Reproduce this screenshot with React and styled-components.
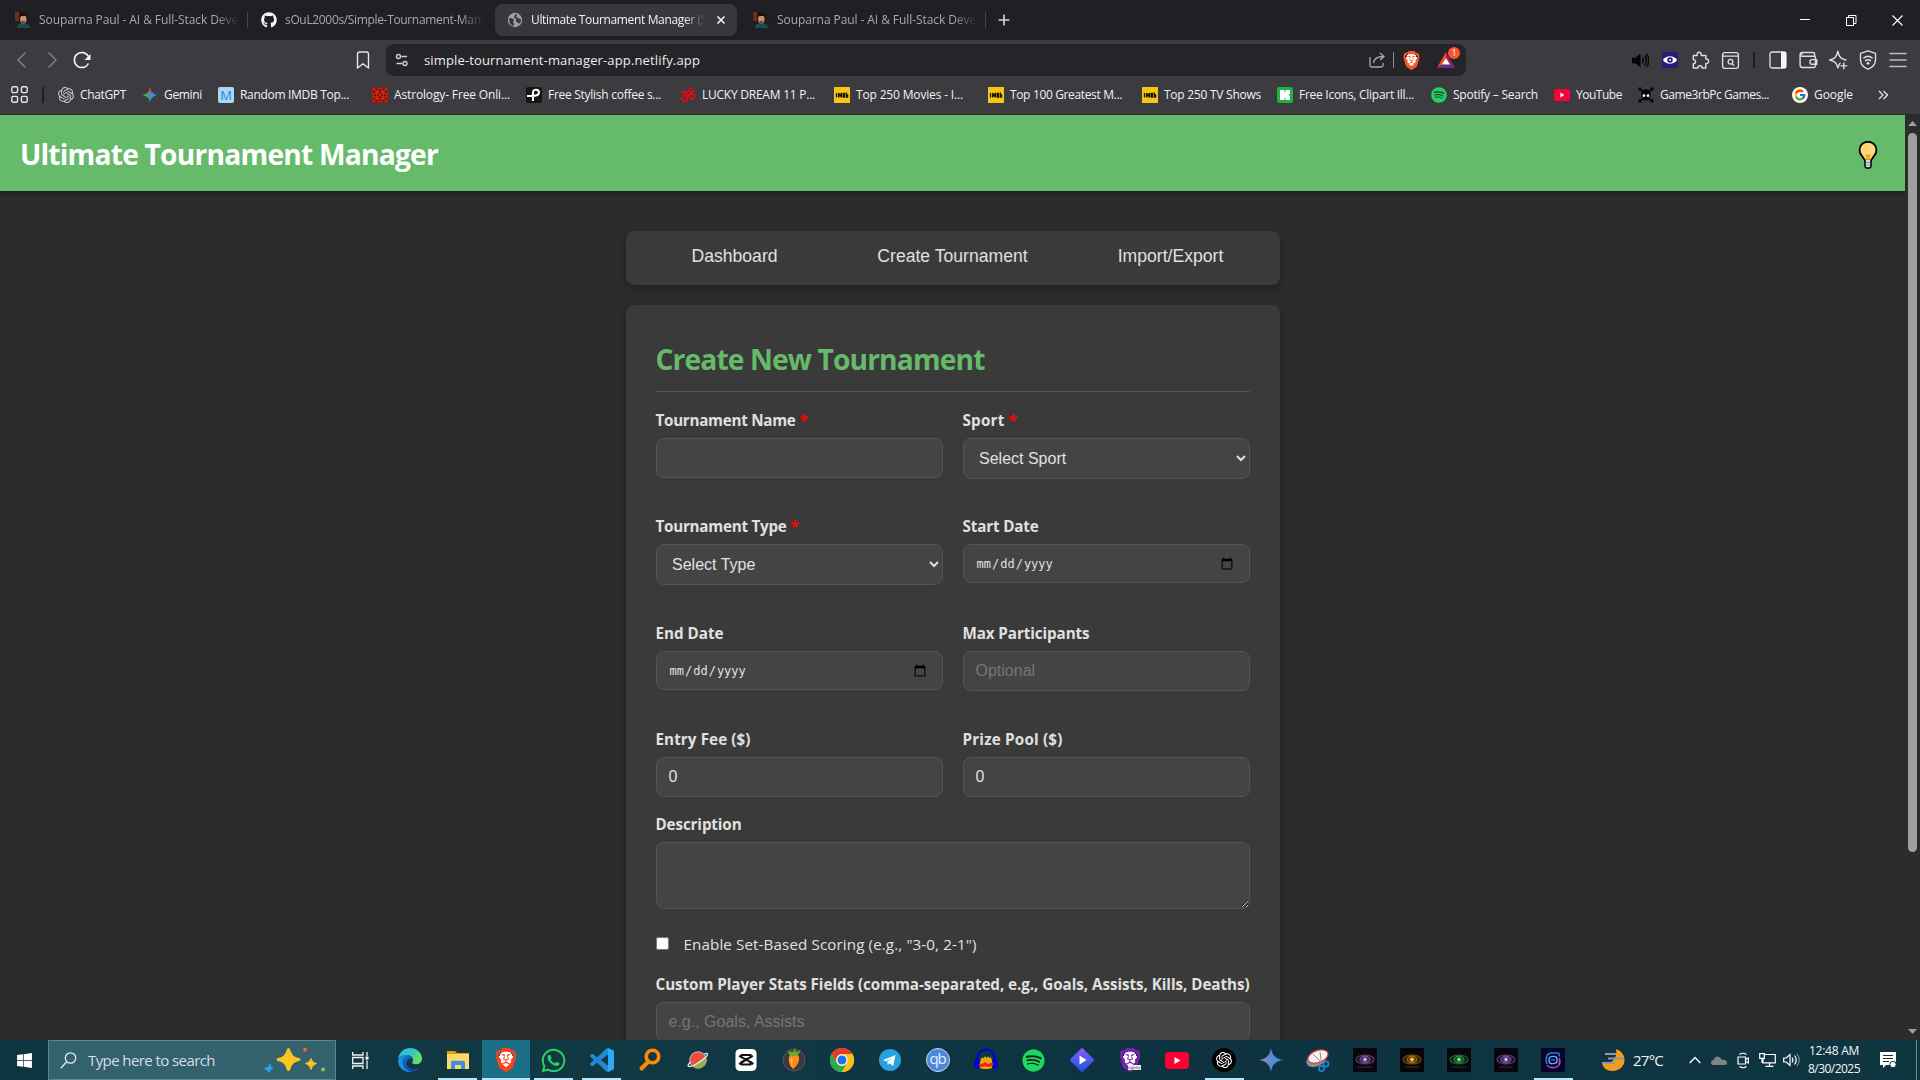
import React, { useLayoutEffect, useRef, useState } from "react";
import styled, { createGlobalStyle, css } from "styled-components";
import { FaGithub, FaSpotify, FaWhatsapp, FaWindows } from "react-icons/fa";
import { FcGoogle } from "react-icons/fc";
import { SiOpenai, SiBrave } from "react-icons/si";

const ui = `"Segoe UI", "Open Sans", "Noto Sans", sans-serif`;
const arial = `Arial, "Liberation Sans", sans-serif`;

const GlobalStyle = createGlobalStyle`
  * { box-sizing: border-box; }
  body { margin: 0; background: #2c2c2c; font-family: ${ui}; overflow: hidden; }
  svg { display: block; flex: none; }
`;

/* ---------- text that tracks itself to a given width ---------- */
const FitText = styled.span`
  display: inline-block;
  white-space: nowrap;
`;

function Fit({ w, children }) {
  const ref = useRef(null);
  const [spacing, setSpacing] = useState(0);
  useLayoutEffect(() => {
    const natural = ref.current.getBoundingClientRect().width;
    setSpacing((w - natural) / children.length);
  }, [w, children]);
  return (
    <FitText ref={ref} style={{ letterSpacing: `${spacing}px` }}>
      {children}
    </FitText>
  );
}

/* ---------- frame ---------- */
const Screen = styled.div`
  width: 1920px;
  height: 1080px;
  display: flex;
  flex-direction: column;
  overflow: hidden;
`;

/* ---------- tab strip ---------- */
const TabStrip = styled.div`
  height: 40px;
  flex: none;
  display: flex;
  align-items: flex-start;
  padding: 4px 0 0 3px;
  background: #1f1f24;
`;
const Tab = styled.div`
  width: 242px;
  height: 32px;
  display: flex;
  align-items: center;
  gap: 8px;
  padding-left: 12px;
  border-radius: 8px;
  font-size: 12px;
  color: ${(p) => (p.$active ? "#f2f2f3" : "#a9a9ad")};
  background: ${(p) => (p.$active ? "#37373c" : "transparent")};
`;
const TabTitle = styled.div`
  width: ${(p) => p.$w}px;
  padding-bottom: 2px;
  overflow: hidden;
  white-space: nowrap;
  mask-image: linear-gradient(to right, #000 88%, transparent 100%);
`;
const TabGap = styled.div`
  width: 4px;
  height: 32px;
  display: flex;
  align-items: center;
  justify-content: center;
  &::before {
    content: "";
    width: 1px;
    height: 16px;
    background: ${(p) => (p.$line ? "#44444a" : "transparent")};
  }
`;
const NewTab = styled.div`
  margin: 6px 0 0 4px;
  width: 26px;
  height: 20px;
  display: flex;
  align-items: center;
  justify-content: center;
`;
const WindowButtons = styled.div`
  margin-left: auto;
  height: 32px;
  display: flex;
`;
const WindowButton = styled.div`
  width: 46px;
  display: flex;
  align-items: center;
  justify-content: center;
`;

/* ---------- toolbar ---------- */
const Toolbar = styled.div`
  height: 40px;
  flex: none;
  display: flex;
  align-items: center;
  background: #3b3b40;
`;
const ToolGroup = styled.div`
  display: flex;
  align-items: center;
  ${(p) =>
    p.$left
      ? css`
          width: 386px;
          padding: 0 8px 0 7px;
        `
      : css`
          margin-left: auto;
          padding-right: 7px;
        `}
`;
const ToolSlot = styled.div`
  width: 30px;
  height: 30px;
  display: flex;
  align-items: center;
  justify-content: center;
  margin-left: ${(p) => (p.$push ? "auto" : 0)};
`;
const Divider = styled.div`
  width: ${(p) => p.$thick || 1}px;
  height: 16px;
  margin: 0 ${(p) => p.$m || 0}px;
  background: ${(p) => p.$color};
`;
const UrlBar = styled.div`
  width: 1080px;
  height: 32px;
  display: flex;
  align-items: center;
  padding: 0 11px 0 8px;
  border-radius: 8px;
  background: #242429;
  color: #ececee;
  font-size: 13px;
`;
const UrlText = styled.div`
  margin-left: 14px;
  flex: 1;
`;
const Triangle = styled.div`
  position: relative;
  margin-left: 16px;
`;
const Badge = styled.div`
  position: absolute;
  left: 11px;
  top: -4px;
  width: 12px;
  height: 12px;
  border-radius: 6px;
  background: #fb542b;
  color: #fff;
  font-size: 9px;
  line-height: 12px;
  text-align: center;
`;

/* ---------- bookmarks ---------- */
const BookmarkBar = styled.div`
  height: 35px;
  flex: none;
  display: flex;
  align-items: center;
  padding: 0 0 5px 11px;
  background: #3b3b40;
  border-bottom: 1px solid #2e2e32;
  color: #f1f1f2;
  font-size: 12px;
`;
const BookmarkItem = styled.div`
  width: ${(p) => p.$w}px;
  flex: none;
  display: flex;
  align-items: center;
  gap: 6px;
`;

/* ---------- page ---------- */
const Viewport = styled.div`
  height: 925px;
  flex: none;
  display: flex;
  background: #2c2c2c;
`;
const Page = styled.div`
  flex: 1;
  height: 925px;
  overflow: hidden;
  display: flex;
  flex-direction: column;
  align-items: center;
`;
const Header = styled.header`
  width: 100%;
  height: 76px;
  flex: none;
  display: flex;
  align-items: center;
  justify-content: space-between;
  padding: 0 27px 0 20px;
  background: #66bb6a;
  box-shadow: 0 2px 5px rgba(0, 0, 0, 0.4);
`;
const SiteTitle = styled.h1`
  margin: 0;
  padding-top: 1px;
  font-size: 28.2px;
  font-weight: 700;
  color: #fff;
`;
const BulbBox = styled.div`
  padding-top: 3px;
`;
const Card = styled.section`
  width: 654px;
  flex: none;
  border-radius: 8px;
  background: #3a3a3a;
  box-shadow: 0 4px 8px rgba(0, 0, 0, 0.28);
`;
const Nav = styled(Card)`
  height: 54px;
  margin: 40px 0 20px;
  display: flex;
  padding-bottom: 3px;
`;
const NavButton = styled.button`
  flex: 1;
  border: 0;
  padding: 0;
  background: transparent;
  color: #e0e0e0;
  font: 17.6px ${arial};
`;
const FormCard = styled(Card)`
  height: 900px;
  padding: 30px;
  color: #e0e0e0;
`;
const FormTitle = styled.h2`
  margin: 0 0 18px;
  height: 57px;
  line-height: 48px;
  font-size: 28.2px;
  color: #66bb6a;
  border-bottom: 1px solid #555;
`;
const FieldGrid = styled.div`
  display: grid;
  grid-template-columns: 1fr 1fr;
  column-gap: 20px;
  grid-template-rows: 106.3px 106.3px 106.3px 68px;
  margin-bottom: 17px;
`;
const Field = styled.div`
  display: flex;
  flex-direction: column;
`;
const Label = styled.label`
  height: 20px;
  line-height: 20px;
  margin-bottom: 8px;
  font-size: 15.2px;
  font-weight: 700;
  white-space: nowrap;
`;
const Required = styled.span`
  margin-left: 4px;
  color: #f00;
`;
const control = css`
  width: 100%;
  margin: 0;
  border: 1px solid #555;
  border-radius: 8px;
  background: #444;
  color: #e0e0e0;
  font: 16px ${arial};
  outline: 0;
`;
const Input = styled.input`
  ${control}
  height: 40px;
  padding: 0 12px;
  &::placeholder { color: #757575; }
`;
const DateInput = styled.input`
  ${control}
  height: 39px;
  padding: 1px 13px 0 12px;
  font: 12px "DejaVu Sans Mono", monospace;
  &::-webkit-calendar-picker-indicator { width: 14px; height: 14px; }
`;
const Select = styled.select`
  ${control}
  height: 41px;
  padding: 0 12px 0 11.5px;
`;
const TextArea = styled.textarea`
  ${control}
  display: block;
  height: 67px;
  padding: 12px;
  resize: vertical;
`;
const CheckRow = styled.label`
  display: flex;
  align-items: center;
  gap: 15px;
  height: 20px;
  margin: 25px 0 20px;
  font-size: 15.2px;
  input { margin: 0; width: 13px; height: 13px; }
`;

/* ---------- scrollbar ---------- */
const ScrollTrack = styled.div`
  width: 15px;
  height: 925px;
  display: flex;
  flex-direction: column;
  align-items: center;
  justify-content: space-between;
  padding: 6px 0;
  background: #2c2c2c;
`;
const ScrollThumb = styled.div`
  width: 9px;
  height: 719px;
  margin: 7px 0 auto;
  border-radius: 5px;
  background: #9f9f9f;
`;

/* ---------- taskbar ---------- */
const Taskbar = styled.div`
  height: 40px;
  flex: none;
  display: flex;
  background: linear-gradient(90deg, #0e3440, #113944 30%, #0d3341 60%, #0f3541);
  color: #f3f6f7;
`;
const marks = {
  0: "none",
  1: "linear-gradient(#b5e8fa, #b5e8fa) center bottom / 39px 2px no-repeat",
  2: "linear-gradient(#b5e8fa, #b5e8fa) center bottom / 100% 2px no-repeat #1b6f86",
};
const Slot = styled.div`
  width: ${(p) => p.$w || 48}px;
  height: 40px;
  flex: none;
  display: flex;
  align-items: center;
  justify-content: center;
  background: ${(p) => marks[p.$state || 0]};
`;
const Search = styled.div`
  width: 288px;
  height: 40px;
  display: flex;
  align-items: center;
  padding: 0 9px 0 11px;
  border: 1px solid #5d8791;
  background: #34616e;
  color: #d3dfe2;
  font-size: 15px;
`;
const SearchHint = styled.div`
  margin-left: 11px;
  flex: 1;
`;
const Apps = styled.div`
  display: flex;
  margin: 0 0.5px 0 1.5px;
`;
const Weather = styled.div`
  width: 106px;
  padding-left: 24px;
  display: flex;
  align-items: center;
  gap: 7px;
  font-size: 15px;
`;
const Clock = styled.div`
  width: 62px;
  display: flex;
  flex-direction: column;
  align-items: center;
  justify-content: center;
  font-size: 12px;
  line-height: 18px;
`;
const ShowDesktop = styled.div`
  width: 1px;
  margin-left: auto;
  margin-right: 3px;
  background: #6d8a92;
`;

/* ---------- small drawings ---------- */
const Svg = ({ s = 16, w, h, vb = "0 0 24 24", children, ...rest }) => (
  <svg width={w || s} height={h || s} viewBox={vb} fill="none" {...rest}>
    {children}
  </svg>
);
const line = { stroke: "#dededf", strokeWidth: 1.7, strokeLinecap: "round", strokeLinejoin: "round" };

const Portrait = () => (
  <Svg vb="0 0 16 16">
    <path fill="#241c1a" d="M0 0h16v16H0z" />
    <path fill="#6b3018" d="M0 0h4v9H0z" />
    <path fill="#1d4c50" d="M2 16c0-4 3-5 6-5s7 1 7 5z" />
    <ellipse cx="8.300" cy="7" rx="3.200" ry="4.400" fill="#c98f75" />
    <path fill="#16100f" d="M4.600 6C4 1.500 6 .5 9 .8s3.500 2 2.800 5L10.500 4H6z" />
    <path fill="#5b372d" d="M6.500 9.500c1-.6 2.500-.6 3.500 0l-.7 1.300h-2z" />
  </Svg>
);
const Globe = () => (
  <Svg vb="0 0 16 16">
    <circle cx="8" cy="8" r="7.200" fill="#9b9ea3" />
    <path fill="#37373c" d="M2.200 6.500c1.800-.6 4 0 4.600 1.200.5 1.200-.8 1.500-.5 2.500.3.800.8 1 .6 2.300l-.4 1.500C3.500 13.500 1.800 10 2.200 6.500zM8.500 2c1.500 0 2 1 1.200 1.800-.7.800-.2 1.600.8 2 1.200.4 1.800 1.400 3.300 1.200.3 1.500 0 3-1 4.500-1.300 0-1.800-1-3-1.500-1.200-.6-1-1.800-.2-2.500L7.500 6c-1-1 .2-2 1-4z" />
  </Svg>
);
const Imdb = () => (
  <Svg vb="0 0 16 16">
    <path fill="#f5c518" d="M0 0h16v16H0z" />
    <path stroke="#1b1600" strokeWidth="1.300" d="M2.500 6v4.500M4.600 10.500V6l1.400 3 1.400-3v4.500M9.200 6.500v3.500h1.300V6.500zM12.400 5.500v4.700h1.200V8h-1.200" />
  </Svg>
);
const YouTube = ({ w = 16, h = 12 }) => (
  <Svg w={w} h={h} vb="0 0 24 17" preserveAspectRatio="none">
    <rect width="24" height="17" rx="4" fill="#ff0033" />
    <path fill="#fff" d="M9.500 5v7l6-3.500z" />
  </Svg>
);
const starPath = "M12 0c.8 7 5 11.200 12 12-7 .8-11.200 5-12 12-.8-7-5-11.200-12-12 7-.8 11.200-5 12-12z";
const BookmarkGemini = () => (
  <Svg s={16}>
    <defs>
      <linearGradient id="gem-a" x1="0" y1=".7" x2="1" y2=".4">
        <stop offset="0" stopColor="#f6c22d" />
        <stop offset=".35" stopColor="#38a66b" />
        <stop offset=".6" stopColor="#3f86f6" />
        <stop offset="1" stopColor="#3f86f6" />
      </linearGradient>
    </defs>
    <path fill="url(#gem-a)" d={starPath} />
    <path fill="#ea4335" d="M12 0c.4 3.500 1.600 6.200 3.600 8.300L12 9 8.400 8.300C10.400 6.200 11.600 3.500 12 0z" />
  </Svg>
);
const TaskbarGemini = () => (
  <Svg s={24}>
    <defs>
      <linearGradient id="gem-b" x1="0" y1="0" x2="1" y2="0">
        <stop offset="0" stopColor="#b480c8" />
        <stop offset=".5" stopColor="#5d86d0" />
        <stop offset="1" stopColor="#2fa3dc" />
      </linearGradient>
    </defs>
    <path fill="url(#gem-b)" d={starPath} />
  </Svg>
);
const BraveWrap = styled.div`
  width: ${(p) => p.$s}px;
  height: ${(p) => p.$s}px;
  display: flex;
  color: ${(p) => p.$c};
  background: radial-gradient(ellipse 30% 38% at 50% 48%, #fff 98%, transparent 100%);
`;
const BraveFace = ({ s = 20, color = "#fb542b" }) => (
  <BraveWrap $s={s} $c={color}>
    <SiBrave size={s} />
  </BraveWrap>
);

const Om = () => (
  <Svg>
    <path stroke="#f00" strokeWidth="2.600" strokeLinecap="round" d="M3 9c2-3 7-2 7 1 0 2.500-3 2.500-4 2.500 3 0 6 1 5.500 5C11 22 3 22 2 16.500M11 14c3 0 3-3.500 6-4 4-.5 5.500 3.500 4 6.500-1.500 2.500-5 2-5-.5M12 5.500c3 2.500 7 2 9-1" />
    <circle cx="16.500" cy="2" r="1.700" fill="#f00" />
  </Svg>
);
const Skull = () => (
  <Svg>
    <g fill="#050505">
      <circle cx="3" cy="3" r="2.500" /><circle cx="21" cy="3" r="2.500" /><circle cx="3" cy="21" r="2.500" /><circle cx="21" cy="21" r="2.500" />
      <path d="M5 11c0-10 14-10 14 0 0 3-1 5-2 5v4H7v-4c-1 0-2-2-2-5z" />
      <path stroke="#050505" strokeWidth="2.500" d="M3 3l5 5M21 3l-5 5M3 21l5-4M21 21l-5-4" />
    </g>
    <circle cx="9" cy="13" r="2" fill="#fff" /><circle cx="15" cy="13" r="2" fill="#fff" />
  </Svg>
);
const LetterTile = styled.div`
  width: 16px;
  height: 16px;
  flex: none;
  border-radius: 2px;
  background: #a9d8f7;
  color: #2f86c9;
  font: 400 13px/16px "Open Sans", sans-serif;
  text-align: center;
`;

const bookmarks = [
  [84, "ChatGPT", 46, <SiOpenai size={16} color="#c9c9cb" />],
  [76, "Gemini", 38, <BookmarkGemini />],
  [154, "Random IMDB Top...", 109, <LetterTile>M</LetterTile>],
  [154, "Astrology- Free Onli...", 116, (
    <Svg key="a" vb="0 0 16 16"><rect width="16" height="16" rx="2" fill="#4a1610" /><path stroke="#d8230f" strokeWidth="1.200" d="M1 1h14v14H1zM1 1l14 14M15 1L1 15M8 1l7 7-7 7-7-7zM4.500 4.500h7v7h-7z" /></Svg>
  )],
  [154, "Free Stylish coffee s...", 113, (
    <Svg key="p" vb="0 0 16 16"><rect width="16" height="16" rx="2" fill="#161616" /><path stroke="#fff" strokeWidth="2" d="M7 14V5.500C7 1.500 13 2 13 5.500S9 9 1 9" /></Svg>
  )],
  [154, "LUCKY DREAM 11 P...", 113, <Om />],
  [154, "Top 250 Movies - I...", 107, <Imdb />],
  [154, "Top 100 Greatest M...", 112, <Imdb />],
  [135, "Top 250 TV Shows", 97, <Imdb />],
  [154, "Free Icons, Clipart Ill...", 115, (
    <Svg key="f" vb="0 0 16 16"><rect width="16" height="16" rx="2" fill="#1fb141" /><path fill="#fff" d="M3 3h4.500v3l1.500-3h4v3.500L12 8l1 1.500V13H9l-1.500-3v3H3z" /></Svg>
  )],
  [123, "Spotify – Search", 85, <FaSpotify size={16} color="#1ed760" />],
  [84, "YouTube", 46, <YouTube />],
  [154, "Game3rbPc Games...", 109, <Skull />],
  [86, "Google", 39, (
    <Svg key="g" vb="0 0 16 16"><circle cx="8" cy="8" r="8" fill="#fff" /><g transform="translate(1.500 1.500)"><FcGoogle size={13} /></g></Svg>
  )],
];

const EyeTile = ({ c, bg = "#08060c" }) => (
  <Svg s={24}>
    <path fill={bg} d="M0 0h24v24H0z" />
    <ellipse cx="12" cy="11.500" rx="9" ry="4.500" fill={c} fillOpacity=".15" stroke={c} strokeOpacity=".5" strokeWidth="1.200" />
    <ellipse cx="12" cy="11.500" rx="5" ry="3.500" fill={c} fillOpacity=".3" stroke={c} strokeWidth=".8" />
    <circle cx="12" cy="11.500" r="2.200" fill={c} /><circle cx="12" cy="11.500" r=".9" fill="#fff" />
    <path stroke={c} strokeOpacity=".35" d="M5 19h14" />
  </Svg>
);

const QbDisc = styled.div`
  width: 24px;
  height: 24px;
  border-radius: 50%;
  border: 1px solid #c2dcf8;
  background: #4c88d6;
  color: #e6f1ff;
  font: 15px/19px "Open Sans", sans-serif;
  text-align: center;
`;
const SpotifyBack = styled.div`
  border-radius: 50%;
  background: #10231a;
`;
const NightlyBox = styled.div`
  position: relative;
`;
const NightlyLabel = styled.div`
  position: absolute;
  left: 10px;
  top: 17px;
  width: 13px;
  height: 5px;
  background: #eee;
  color: #333;
  font: 4px/5px "Open Sans", sans-serif;
  text-align: center;
`;
const OpenAiBack = styled.div`
  width: 24px;
  height: 24px;
  border-radius: 50%;
  display: flex;
  align-items: center;
  justify-content: center;
  background: #000;
  color: #fff;
`;

const apps = [
  [48, 0, (
    <Svg key="edge" s={24}>
      <defs>
        <linearGradient id="eg" x1="0" y1="0" x2="1" y2=".5"><stop offset="0" stopColor="#2bb4ea" /><stop offset=".55" stopColor="#35c7c3" /><stop offset="1" stopColor="#67e05a" /></linearGradient>
        <linearGradient id="eb" x1="0" y1="0" x2=".6" y2="1"><stop offset="0" stopColor="#1577cf" /><stop offset="1" stopColor="#0c4aa0" /></linearGradient>
      </defs>
      <path fill="url(#eg)" d="M.3 10C1.500 4 6.200 0 12 0c7 0 12 5 12 10.200 0 4-3 6-6 6-2.700 0-4-.9-4-1.700 0-.7 1-1.200 1-2.800C15 9 12.500 7.200 9 7.200 5 7.200 1.800 8.500.3 10z" />
      <path fill="url(#eb)" d="M0 12.500C.5 8.500 4.500 7 8.500 7c4.200 0 6.500 2.500 6.500 4.700-1.500-2.200-6.500-1.200-6.500 3.300 0 4 4 7 8.500 6.200 2-.3 3.800-1.200 5-2.400C20 22 16.200 24 12 24 5 24 0 19 0 12.500z" />
      <path fill="#1a8fdb" d="M8.500 7C4.800 9 3.500 14 5.500 18c1.600 3.200 4.300 5 7.500 5.900C6 24.500 0 19.500 0 12.500.5 8.500 4.500 7 8.500 7z" />
    </Svg>
  )],
  [48, 1, (
    <Svg key="ex" s={24}>
      <path fill="#e0a100" d="M1 3h8l2 2h12v4H1z" /><path fill="#ffd968" d="M1 6h22v15H1z" />
      <path fill="#3f8fe0" d="M5 21v-6.500c0-1 .8-1.700 1.700-1.700h10.600c1 0 1.700.7 1.700 1.700V21h-4v-4H9v4z" />
    </Svg>
  )],
  [48, 2, <BraveFace key="br" s={24} color="#ff3f17" />],
  [48, 1, <FaWhatsapp key="wa" size={27} color="#25d366" />],
  [48, 1, (
    <Svg key="vs" s={24}>
      <path fill="#1f8ad2" fillRule="evenodd" d="M23.150 2.587L18.210.210a1.494 1.494 0 0 0-1.705.290l-9.460 8.630-4.120-3.128a.999.999 0 0 0-1.276.057L.327 7.261A1 1 0 0 0 .326 8.740L3.899 12 .326 15.260a1 1 0 0 0 .001 1.479L1.650 17.940a.999.999 0 0 0 1.276.057l4.120-3.128 9.460 8.630a1.492 1.492 0 0 0 1.704.290l4.942-2.377A1.500 1.500 0 0 0 24 20.060V3.939a1.500 1.500 0 0 0-.850-1.352zm-5.146 14.861L10.826 12l7.178-5.448v10.896z" />
      <path fill="#31a8f5" d="M18 0l5.150 2.587A1.500 1.500 0 0 1 24 3.940v16.120a1.500 1.500 0 0 1-.85 1.350L18 24z" />
    </Svg>
  )],
  [48, 0, (
    <Svg key="or" s={24}><circle cx="14.500" cy="8.500" r="6.300" stroke="#ff8a00" strokeWidth="3.600" /><path stroke="#ff8a00" strokeWidth="4" strokeLinecap="round" d="M9.500 14.500L3.500 20.500" /></Svg>
  )],
  [48, 0, (
    <Svg key="pl" s={22}><circle cx="12" cy="12" r="9" fill="#ed4c3c" stroke="#e6dfe2" strokeWidth=".8" /><path fill="#8fb544" d="M21 10.500a9 9 0 0 1-15 8z" /><path stroke="#e6dfe2" strokeWidth="1.500" d="M4 14c-5 5-3 6.500 4 3.500 8-4 16-10.500 14-12.500-.6-.5-2 0-3.500.8" /></Svg>
  )],
  [48, 0, (
    <Svg key="cc" s={22}><rect x=".5" y="0" width="23" height="24" rx="5" fill="#fff" /><path stroke="#111" strokeWidth="2.200" strokeLinejoin="round" d="M19.500 7.500L7 14.300V17h10v-2.700L4.500 7.500M7 9V6.500h10V9L4.500 16.500M17 14l3 2.500" /></Svg>
  )],
  [48, 0, (
    <Svg key="fl" s={24}><circle cx="12" cy="12" r="11" fill="#3a3a3e" stroke="#555" /><path fill="#ff8a1c" d="M7 9c1-4 9-4 10 0 .8 4-2 9-6 12-3-2-5-8-4-12z" /><path fill="#ffb85c" d="M10 9c1 3 1 6 0 9-1.500-3-2-6 0-9z" /><path fill="#5fae2a" d="M6 3l5 1 2-4 1 4 5-2-3 5-5 1-4-1z" /></Svg>
  )],
  [48, 0, (
    <Svg key="ch" s={24}>
      <circle cx="12" cy="12" r="12" fill="#fbc116" />
      <path fill="#e33b2e" d="M1.600 6A12 12 0 0 1 22.400 6H12a6 6 0 0 0-5.200 9z" />
      <path fill="#2da94f" d="M1.600 6l5.200 9a6 6 0 0 0 10.400 0L12 24A12 12 0 0 1 1.600 6z" />
      <path fill="#fbc116" d="M12 6h10.400A12 12 0 0 1 12 24l5.200-9A6 6 0 0 0 12 6z" />
      <circle cx="12" cy="12" r="5.700" fill="#fff" /><circle cx="12" cy="12" r="4.500" fill="#1a73e8" />
    </Svg>
  )],
  [48, 0, (
    <Svg key="te" s={22}><circle cx="12" cy="12" r="12" fill="#2aa1de" /><path fill="#fff" d="M4.500 12L18 6.500 15.500 18.500l-4-3-2 2-.5-3.500 6-5-7.500 4.500z" /></Svg>
  )],
  [48, 0, <QbDisc key="qb"><Fit w={16}>qb</Fit></QbDisc>],
  [48, 0, (
    <Svg key="au" s={24}><path stroke="#0000d8" strokeWidth="2.200" d="M3 15C1 -3 23 -3 21 15" /><ellipse cx="3" cy="16" rx="3" ry="5" fill="#0000d8" /><ellipse cx="21" cy="16" rx="3" ry="5" fill="#0000d8" /><path fill="#e8a80c" d="M6 14l1-3 1.500-2 1 1.500L11 8l1.500 2L14 8l1 2 1.500-1L18 12v8l-3 1H9l-3-1z" /><path fill="#f0250f" d="M5 15.500l3 .5 3-2 3 2 5-2v4l-5 1-3-1-3 1-3-1z" /></Svg>
  )],
  [48, 0, <SpotifyBack key="sp"><FaSpotify size={23} color="#1ed760" /></SpotifyBack>],
  [48, 0, (
    <Svg key="di" s={24}><defs><linearGradient id="dg" x1="0" y1="0" x2="0" y2="1"><stop offset="0" stopColor="#8a5cf5" /><stop offset="1" stopColor="#1b52e8" /></linearGradient></defs><path fill="url(#dg)" d="M11 .5q1-1 2 0L23.500 11q1 1 0 2L13 23.500q-1 1-2 0L.5 13q-1-1 0-2z" /><path fill="#fff" d="M9.500 7.500v9l7-4.500z" /></Svg>
  )],
  [48, 0, <NightlyBox key="bn"><BraveFace s={24} color="#7a22b0" /><NightlyLabel>nightly</NightlyLabel></NightlyBox>],
  [47, 0, <YouTube key="yt" w={24} h={17} />],
  [47, 1, <OpenAiBack key="oa"><SiOpenai size={16} /></OpenAiBack>],
  [47, 0, <TaskbarGemini key="ge" />],
  [47, 0, (
    <Svg key="sn" s={24}><ellipse cx="10" cy="12" rx="10" ry="6.500" fill="#8d9092" transform="rotate(-20 10 12)" /><ellipse cx="12" cy="8.500" rx="10.500" ry="6" fill="#f4f4f4" stroke="#e23b3b" strokeWidth="1.200" transform="rotate(-20 12 8.500)" /><path stroke="#8a8a8a" strokeWidth="1" d="M7 6l9 9M14 4l1.500 11" /><circle cx="20" cy="16" r="2.600" stroke="#1d86d6" strokeWidth="1.600" /><circle cx="15.500" cy="20.500" r="2.600" stroke="#1d86d6" strokeWidth="1.600" /></Svg>
  )],
  [47, 0, <EyeTile key="e1" c="#9a6cc4" />],
  [47, 0, <EyeTile key="e2" c="#d98f10" />],
  [47, 0, <EyeTile key="e3" c="#2fb558" />],
  [47, 0, <EyeTile key="e4" c="#9a6cc4" />],
  [47, 1, (
    <Svg key="e5" s={24}><path fill="#07042a" d="M0 0h24v24H0z" /><path stroke="#2f7de0" strokeWidth="1.500" d="M6 16C4 11 5 5 11 5h5c2 0 3 1.500 2 3.500" /><path stroke="#c346d8" strokeWidth="1.500" d="M6 17c2 3.500 10 3.500 12 0 1-2 1-5 0-7" /><rect x="8" y="8.500" width="8" height="7" rx="3" stroke="#49b5ff" strokeWidth="1.400" transform="rotate(-8 12 12)" /><path stroke="#7a5cf0" strokeWidth="1.300" d="M10 12h4" /></Svg>
  )],
];

const Browser = () => (
  <>
    <TabStrip>
      <Tab><Portrait /><TabTitle $w={200}><Fit w={202}>Souparna Paul - AI &amp; Full-Stack Devel</Fit></TabTitle></Tab>
      <TabGap $line />
      <Tab><FaGithub size={16} color="#f5f5f5" /><TabTitle $w={199}><Fit w={202}>sOuL2000s/Simple-Tournament-Mana</Fit></TabTitle></Tab>
      <TabGap />
      <Tab $active>
        <Globe />
        <TabTitle $w={174}><Fit w={176}>Ultimate Tournament Manager (S</Fit></TabTitle>
        <Svg s={16} vb="0 0 16 16"><path stroke="#f2f2f3" strokeWidth="1.700" d="M4.500 4.500l7 7M11.500 4.500l-7 7" /></Svg>
      </Tab>
      <TabGap />
      <Tab><Portrait /><TabTitle $w={200}><Fit w={202}>Souparna Paul - AI &amp; Full-Stack Devel</Fit></TabTitle></Tab>
      <TabGap $line />
      <NewTab><Svg s={12} vb="0 0 12 12"><path stroke="#d5d5d8" strokeWidth="1.600" d="M6 .5v11M.5 6h11" /></Svg></NewTab>
      <WindowButtons>
        <WindowButton><Svg s={10} vb="0 0 10 10"><path stroke="#fff" d="M0 4.500h10" /></Svg></WindowButton>
        <WindowButton><Svg s={11} vb="0 0 11 11"><path stroke="#fff" d="M.5 2.500h7v8h-7zM2.500 2.500v-2h7.500v8H7.500" /></Svg></WindowButton>
        <WindowButton><Svg s={11} vb="0 0 11 11"><path stroke="#fff" strokeWidth="1.100" d="M.5.5l10 10M10.500.5l-10 10" /></Svg></WindowButton>
      </WindowButtons>
    </TabStrip>

    <Toolbar>
      <ToolGroup $left>
        <ToolSlot><Svg s={18} vb="0 0 18 18"><path stroke="#838387" strokeWidth="1.400" d="M12.500 1.500L5 9l7.500 7.500" /></Svg></ToolSlot>
        <ToolSlot><Svg s={18} vb="0 0 18 18"><path stroke="#838387" strokeWidth="1.400" d="M5.500 1.500L13 9l-7.500 7.500" /></Svg></ToolSlot>
        <ToolSlot><Svg s={18} vb="0 0 18 18"><path stroke="#f4f4f5" strokeWidth="1.600" d="M15.500 12.500A7.500 7.500 0 1 1 15.500 5.500" /><path fill="#f4f4f5" d="M17.500 3v6h-6z" /></Svg></ToolSlot>
        <ToolSlot $push><Svg s={18} vb="0 0 18 18"><path stroke="#e6e6e8" strokeWidth="1.400" strokeLinejoin="round" d="M3.500 3a2 2 0 0 1 2-2h7a2 2 0 0 1 2 2v14L9 12.800 3.500 17z" /></Svg></ToolSlot>
      </ToolGroup>
      <UrlBar>
        <Svg vb="0 0 16 16"><g stroke="#cfcfd2" strokeWidth="1.400"><circle cx="4.500" cy="4.500" r="2" /><path d="M7.500 4.500H13M2.500 11.500H8" /><circle cx="11" cy="11.500" r="2" /></g></Svg>
        <UrlText><Fit w={276}>simple-tournament-manager-app.netlify.app</Fit></UrlText>
        <Svg vb="0 0 16 16"><path stroke="#a9a9ae" strokeWidth="1.300" d="M1 5v8.500c0 .8.500 1.500 1.500 1.500h10c1 0 1.500-.7 1.500-1.500V11M4.500 11C5 7 8 4.500 14.500 4.500M11 1l4 3.500L11 8" /></Svg>
        <Divider $color="#8f8f94" $m={8} />
        <BraveFace s={19} />
        <Triangle>
          <Svg s={18} h={18} vb="0 0 18 18"><path fill="#ff4a1c" d="M9 1L0 17l5-3 4-7z" /><path fill="#9e1f63" d="M9 1l9 16-5-3-4-7z" /><path fill="#662d91" d="M0 17h18l-5-3.500H5z" /><path fill="#fff" d="M9 7l4 6.500H5z" /></Svg>
          <Badge>1</Badge>
        </Triangle>
      </UrlBar>
      <ToolGroup>
        <ToolSlot><Svg s={17}><path fill="#050505" d="M0 8h5l7-6v20l-7-6H0z" /><path stroke="#050505" strokeWidth="2" d="M14.500 8c2 2 2 6 0 8M17.500 5c4 4 4 10 0 14M20 2.500c5 5 5 14 0 19" /></Svg></ToolSlot>
        <ToolSlot><Svg s={16} vb="0 0 16 16"><path fill="#2d1a78" d="M0 0h16v16H0z" /><path fill="#fff" d="M1 8c3-5 11-5 14 0-3 5-11 5-14 0z" /><circle cx="8" cy="8" r="2.800" fill="#2d1a78" /><circle cx="8" cy="8" r="1" fill="#fff" /></Svg></ToolSlot>
        <ToolSlot><Svg s={20}><path {...line} d="M4 6.500h4.500C7.500 1.500 14 1.500 13.500 6.500H19v4.300c4.500-.5 4.500 6 0 5.500V21.500h-4.500c0-3.500-5-3.500-5 0H4v-5c3.500 0 3.500-5 0-5z" /></Svg></ToolSlot>
        <ToolSlot><Svg s={19}><rect {...line} x="2" y="2" width="20" height="20" rx="3" /><path {...line} d="M2 6.500h20" /><circle {...line} cx="12" cy="13.500" r="3" /><path {...line} d="M14 16l2 2" /></Svg></ToolSlot>
        <Divider $color="#1e1e22" $thick={2} $m={8} />
        <ToolSlot><Svg s={18} vb="0 0 18 18"><rect x="1" y="1" width="16" height="16" rx="2" stroke="#e6e6e8" strokeWidth="1.300" /><path fill="#f5f5f6" d="M12 1h3.500A1.500 1.500 0 0 1 17 2.500v13a1.500 1.500 0 0 1-1.500 1.500H12z" /></Svg></ToolSlot>
        <ToolSlot><Svg s={20}><path {...line} d="M20 7.500V5a2 2 0 0 0-2-2H5a2.500 2.500 0 0 0-2.500 2.500V18A3 3 0 0 0 5.500 21h13a2.500 2.500 0 0 0 2.500-2.500V9.500a2 2 0 0 0-2-2H5c-3 0-3-3 0-3M22.500 11.500H17a2.500 2.500 0 0 0 0 5.500h5.500z" /></Svg></ToolSlot>
        <ToolSlot><Svg s={20}><path {...line} d="M14.500 16c-1.300 1.300-2 3-2.700 5.500-1.300-6-3.500-8-9.800-9.500C8.300 10.500 10.500 8 11.800 1.500 13 8 15.300 10.500 21.500 12M19 15.500v7M15.500 19h7" /></Svg></ToolSlot>
        <ToolSlot><Svg s={20}><path {...line} d="M12 1l9 3v8c0 5.500-4 9-9 11-5-2-9-5.500-9-11V4z" /><path {...line} d="M7 9.500c3-2.500 7-2.500 10 0M9 12.800c2-1.500 4-1.500 6 0" /><circle cx="12" cy="16" r="1.700" fill="#dededf" /></Svg></ToolSlot>
        <ToolSlot><Svg s={18} vb="0 0 18 18"><path stroke="#bcbcc0" strokeWidth="1.500" d="M.5 2.500h17M.5 9h17M.5 15.500h17" /></Svg></ToolSlot>
      </ToolGroup>
    </Toolbar>

    <BookmarkBar>
      <Svg s={17} vb="0 0 17 17"><g stroke="#e6e6e8" strokeWidth="1.400"><rect x=".8" y=".8" width="5.800" height="5.800" rx="1.500" /><rect x="10.400" y=".8" width="5.800" height="5.800" rx="1.500" /><rect x=".8" y="10.400" width="5.800" height="5.800" rx="1.500" /><rect x="10.400" y="10.400" width="5.800" height="5.800" rx="1.500" /></g></Svg>
      <Divider $color="#1e1e22" $thick={2} $m={14} />
      {bookmarks.map(([w, text, tw, icon], i) => (
        <BookmarkItem key={i} $w={w}>{icon}<Fit w={tw}>{text}</Fit></BookmarkItem>
      ))}
      <Svg s={10} vb="0 0 10 10"><path stroke="#e6e6e8" strokeWidth="1.300" d="M1 1l4 4-4 4M5.500 1l4 4-4 4" /></Svg>
    </BookmarkBar>
  </>
);

const TextLabel = ({ w, required, children }) => (
  <Label><Fit w={w}>{children}</Fit>{required && <Required>*</Required>}</Label>
);

const TournamentPage = () => (
  <Viewport>
    <Page>
      <Header>
        <SiteTitle><Fit w={418}>Ultimate Tournament Manager</Fit></SiteTitle>
        <BulbBox>
          <Svg w={20} h={28} vb="0 0 20 28">
            <path fill="#ffd679" stroke="#000" strokeWidth="1.800" d="M6.800 19.500C6 16 1.500 14.500 1.500 9a8.500 8.200 0 0 1 17 0c0 5.500-4.500 7-5.300 10.500z" />
            <path fill="#d8dde3" stroke="#000" strokeWidth="1.500" d="M7 19v6q0 1.800 1.700 2h2.600q1.700-.2 1.700-2v-6" />
            <path stroke="#f5a800" strokeWidth="1.400" d="M7.500 15L9 14l1 1.500L11 14l1.500 1M9 15v4M11 15v4" />
            <path stroke="#8793a0" d="M8 21.500h4M8 24h4" />
          </Svg>
        </BulbBox>
      </Header>
      <Nav>
        <NavButton>Dashboard</NavButton>
        <NavButton>Create Tournament</NavButton>
        <NavButton>Import/Export</NavButton>
      </Nav>
      <FormCard>
        <FormTitle><Fit w={329}>Create New Tournament</Fit></FormTitle>
        <FieldGrid>
          <Field><TextLabel w={140} required>Tournament Name</TextLabel><Input /></Field>
          <Field><TextLabel w={42} required>Sport</TextLabel><Select><option>Select Sport</option></Select></Field>
          <Field><TextLabel w={131} required>Tournament Type</TextLabel><Select><option>Select Type</option></Select></Field>
          <Field><TextLabel w={76}>Start Date</TextLabel><DateInput type="date" /></Field>
          <Field><TextLabel w={68}>End Date</TextLabel><DateInput type="date" /></Field>
          <Field><TextLabel w={127}>Max Participants</TextLabel><Input placeholder="Optional" /></Field>
          <Field><TextLabel w={95}>Entry Fee ($)</TextLabel><Input defaultValue="0" /></Field>
          <Field><TextLabel w={100}>Prize Pool ($)</TextLabel><Input defaultValue="0" /></Field>
        </FieldGrid>
        <Field><TextLabel w={86}>Description</TextLabel><TextArea /></Field>
        <CheckRow><input type="checkbox" /><Fit w={293}>{'Enable Set-Based Scoring (e.g., "3-0, 2-1")'}</Fit></CheckRow>
        <Field>
          <TextLabel w={594}>Custom Player Stats Fields (comma-separated, e.g., Goals, Assists, Kills, Deaths)</TextLabel>
          <Input placeholder="e.g., Goals, Assists" />
        </Field>
      </FormCard>
    </Page>
    <ScrollTrack>
      <Svg w={9} h={5} vb="0 0 9 5"><path fill="#9f9f9f" d="M4.500 0L9 5H0z" /></Svg>
      <ScrollThumb />
      <Svg w={9} h={5} vb="0 0 9 5"><path fill="#9f9f9f" d="M4.500 5L9 0H0z" /></Svg>
    </ScrollTrack>
  </Viewport>
);

const DesktopBar = () => (
  <Taskbar>
    <Slot><FaWindows size={17} color="#fff" /></Slot>
    <Search>
      <Svg s={17} vb="0 0 17 17"><circle cx="10.500" cy="6" r="5.200" stroke="#e9f0f2" strokeWidth="1.300" /><path stroke="#e9f0f2" strokeWidth="1.300" d="M6.500 10L.8 16.200" /></Svg>
      <SearchHint><Fit w={127}>Type here to search</Fit></SearchHint>
      <Svg w={62} h={26} vb="0 0 62 26">
        <path fill="#f9c61f" d="M24.500 1q1.500 0 2 2.500Q28 10 35 11q1.500.5 1.500 1.500T35 14q-7 1-8.500 8-.5 2-2 2t-2-2Q21 15 14 14q-1.500-.5-1.500-1.500T14 11q7-1 8.500-7.500.500-2.500 2-2.500z" />
        <path fill="#f9c61f" d="M47 11.500q1 4.500 5.500 5-4.500 1-5.500 6-1-5-5.500-6 4.500-.5 5.500-5z" stroke="#f9c61f" strokeLinejoin="round" />
        <path fill="#28a5ee" stroke="#28a5ee" strokeLinejoin="round" d="M6 17q0 4 3 4.500-3 .5-4 4-1-3-4.500-4Q5 21 6 17z" />
        <circle cx="41" cy="2.800" r="2" fill="#f2642f" /><circle cx="59" cy="22.500" r="2" fill="#84c83e" />
      </Svg>
    </Search>
    <Slot><Svg s={17} vb="0 0 17 17"><path stroke="#eef4f5" strokeWidth="1.300" d="M.7 0v3H11V0M.7 17v-3H11v3M.7 5.500H11v6H.7zM15 0v4M15 8.500V17" /><path fill="#fff" d="M13.500 4.500h3v3h-3z" /></Svg></Slot>
    <Apps>
      {apps.map(([w, state, icon], i) => (
        <Slot key={i} $w={w} $state={state}>{icon}</Slot>
      ))}
    </Apps>
    <Weather>
      <Svg w={25} h={24} vb="0 0 25 24"><path fill="#f29c1f" d="M15 1c6 2 9 7 8.500 12-.5 6-6 10-12 10C6 23 2 20 1 15c8 2 16-3 14-14z" /><path stroke="#8d9aa0" strokeWidth="1.800" d="M4 6h11M7 10.500h16M1 15h13" /></Svg>
      <Fit w={30}>27°C</Fit>
    </Weather>
    <Slot $w={24}><Svg s={12} vb="0 0 12 12"><path stroke="#fff" strokeWidth="1.300" d="M.7 9L6 3.500 11.300 9" /></Svg></Slot>
    <Slot $w={24}><Svg w={16} h={9} vb="0 0 16 9"><path fill="#7f8587" d="M2.500 9a2.500 2.500 0 0 1 0-5C3.500 1 6.500-.5 9 1.500c1 .8 1.300 1.500 1.500 2.500 2.500-.8 5.500.5 5.500 3 0 1.200-1 2-2 2z" /></Svg></Slot>
    <Slot $w={24}><Svg w={12} h={17} vb="0 0 12 17"><path stroke="#fff" strokeWidth="1.200" d="M1 5h7.500v7H1zM8.500 7.500L11.300 6v5L8.500 9.500M2.500 2.500q3.500-2.500 7 0M2.500 14.500q3.500 2.500 7 0" /></Svg></Slot>
    <Slot $w={24}><Svg w={17} h={14} vb="0 0 17 14"><path stroke="#fff" strokeWidth="1.200" d="M6 1.500h10.300v8.300H4V6M10.500 10v3M6.500 13.300h8M.7.700h4.600v4.600H.7zM3 5v5" /></Svg></Slot>
    <Slot $w={24}><Svg w={17} h={14} vb="0 0 17 14"><path stroke="#fff" strokeWidth="1.200" d="M.7 5h2.500L7 1.500v11L3.200 9H.7zM9 4.500q2 2.500 0 5M11.500 2.500q3.500 4.500 0 9" /><path stroke="#8fa3a9" d="M14 .7q4.500 6.300 0 12.600" /></Svg></Slot>
    <Clock><Fit w={50}>12:48 AM</Fit><Fit w={52}>8/30/2025</Fit></Clock>
    <Slot $w={46}><Svg w={17} h={17} vb="0 0 17 17"><path fill="#fff" d="M0 0h16v13H6l-3 3v-3H0z" /><path stroke="#10333e" d="M3 3.500h10M3 6.500h10M3 9.500h6" /><circle cx="13" cy="12.500" r="3.200" fill="#fff" stroke="#10333e" /></Svg></Slot>
    <ShowDesktop />
  </Taskbar>
);

export default function App() {
  return (
    <Screen>
      <GlobalStyle />
      <Browser />
      <TournamentPage />
      <DesktopBar />
    </Screen>
  );
}
